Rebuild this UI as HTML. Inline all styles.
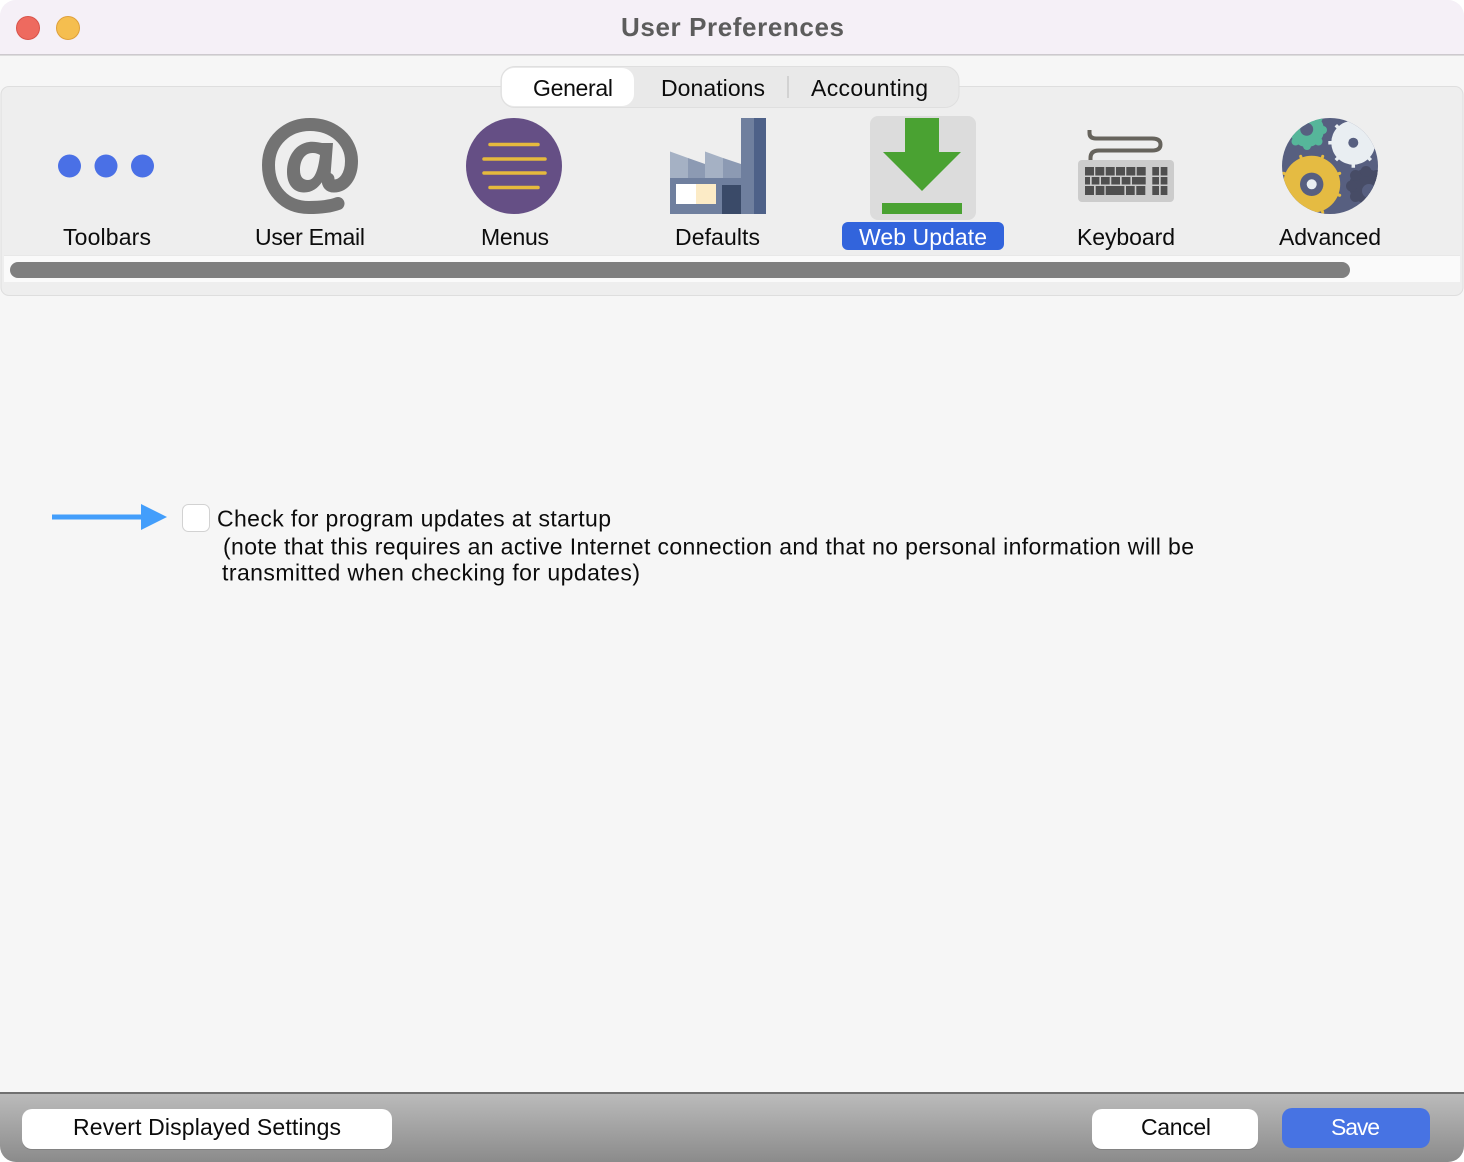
<!DOCTYPE html>
<html><head><meta charset="utf-8"><title>User Preferences</title>
<style>
html,body{margin:0;padding:0;width:1464px;height:1162px;overflow:hidden;background:#fff}
svg{display:block}
text{font-family:"Liberation Sans",sans-serif;font-size:23px;fill:#0c0c0c}
</style></head><body>
<svg width="1464" height="1162" viewBox="0 0 1464 1162" xmlns="http://www.w3.org/2000/svg">
<defs>
<linearGradient id="bar" x1="0" y1="0" x2="0" y2="1"><stop offset="0" stop-color="#bcbcbc"/><stop offset="1" stop-color="#8b8b8b"/></linearGradient>
<clipPath id="win"><rect x="0" y="0" width="1464" height="1162" rx="16"/></clipPath>
<clipPath id="gc"><circle cx="1330" cy="166" r="48"/></clipPath>
</defs>
<g clip-path="url(#win)">
<rect width="1464" height="1162" fill="#f6f6f6"/>
<rect width="1464" height="54" fill="#f5f0f7"/>
<rect y="54" width="1464" height="1" fill="#cdc9ce"/>
<rect y="55" width="1464" height="1" fill="#dcdcdc"/>
<rect x="1" y="86.500" width="1462" height="209" rx="8" fill="#eeeeee" stroke="#dedede"/>
<rect x="4" y="255" width="1456" height="1" fill="#e8e8e8"/>
<rect x="4" y="256" width="1456" height="26" fill="#fafafa"/>
<rect x="10" y="262" width="1340" height="16" rx="8" fill="#7f7f7f"/>
<rect x="0" y="1092" width="1464" height="70" fill="url(#bar)"/>
<rect x="0" y="1092" width="1464" height="2" fill="#707070"/>
</g>
<circle cx="28" cy="28" r="11.500" fill="#ee6a5f" stroke="#d9534a"/>
<circle cx="68" cy="28" r="11.500" fill="#f5be4f" stroke="#dfa03a"/>
<text x="621" y="36" textLength="223" style="font-size:26px;font-weight:bold;fill:#5c5c5c">User Preferences</text>

<rect x="501" y="66.500" width="458" height="41" rx="14" fill="#e9e9e9" stroke="#dfdfdf"/>
<rect x="502" y="68" width="132" height="38" rx="12" fill="#ffffff"/>
<rect x="787" y="76" width="2" height="22" fill="#d2d2d2"/>
<text x="533" y="96" textLength="80">General</text>
<text x="661" y="96" textLength="104">Donations</text>
<text x="811" y="96" textLength="117">Accounting</text>

<!-- Toolbars -->
<circle cx="69.500" cy="166" r="11.500" fill="#4a70e6"/>
<circle cx="106" cy="166" r="11.500" fill="#4a70e6"/>
<circle cx="142.500" cy="166" r="11.500" fill="#4a70e6"/>
<text x="63" y="245" textLength="88">Toolbars</text>

<!-- User Email -->
<path d="M338,203.500 C330,206.500 320,207.500 309,207.500 C284,207.500 268.500,189 268.500,165 C268.500,141 287,124.500 310,124.500 C334,124.500 351.500,141 351.500,161 C351.500,176 344,186 334,186 C330,186 328,184 328,179" fill="none" stroke="#737373" stroke-width="13" stroke-linecap="round"/>
<path fill-rule="evenodd" fill="#737373" d="M333,143 L322,143 C317,142 313,141.500 309,142 C296,143.500 287,156 287,172 C287,185 294,192.500 304,192.500 C312,192.500 318,188 322,182 L330,182 Z M313,153 C305,152.500 300,160 300,170 C300,177 303,180 308,180 C314,180 318,172 320,155 C318,154 316,153 313,153 Z"/>
<text x="255" y="245" textLength="110">User Email</text>

<!-- Menus -->
<circle cx="514" cy="166" r="48" fill="#654f85"/>
<g stroke="#e5b93d" stroke-width="3.500" stroke-linecap="round">
<line x1="490" y1="144.500" x2="538" y2="144.500"/>
<line x1="484" y1="159" x2="545" y2="159"/>
<line x1="484" y1="173" x2="545" y2="173"/>
<line x1="490" y1="187.500" x2="538" y2="187.500"/>
</g>
<text x="481" y="245" textLength="68">Menus</text>

<!-- Defaults -->
<path d="M670,151.500 L688,158 V179 H670Z" fill="#a5b1c4"/>
<path d="M688,158 L705,164 V179 H688Z" fill="#8c9ab3"/>
<path d="M705,151.500 L723,158 V179 H705Z" fill="#a5b1c4"/>
<path d="M723,158 L741,164 V179 H723Z" fill="#8c9ab3"/>
<rect x="670" y="178" width="71" height="36" fill="#6f7f9e"/>
<rect x="741" y="118" width="13" height="96" fill="#6f7f9e"/>
<rect x="754" y="118" width="12" height="96" fill="#4e6188"/>
<rect x="676" y="184" width="20" height="20" fill="#ffffff"/>
<rect x="696" y="184" width="20" height="20" fill="#fcebc6"/>
<rect x="722" y="185" width="19" height="29" fill="#3a4a68"/>
<text x="675" y="245" textLength="85">Defaults</text>

<!-- Web Update -->
<rect x="870" y="116" width="106" height="104" rx="8" fill="#dcdcdc"/>
<path d="M905,118 H939 V152 H961 L922,191 L883,152 H905Z" fill="#4aa232"/>
<rect x="882" y="203" width="80" height="11" fill="#4aa232"/>
<rect x="842" y="222" width="162" height="28" rx="6" fill="#3264dc"/>
<text x="859" y="245" textLength="128" style="fill:#fff">Web Update</text>

<!-- Keyboard -->
<path d="M1089.500,130 V133 Q1089.500,138.500 1096,138.500 H1152 Q1160.500,138.500 1160.500,144.500 Q1160.500,150.500 1152,150.500 H1099 Q1090.500,150.500 1090.500,158 V161" fill="none" stroke="#66635c" stroke-width="4"/>
<rect x="1078" y="160" width="96" height="42" rx="4" fill="#cccccc"/>
<g fill="#4f4f4f">
<rect x="1085" y="167" width="9" height="8.500"/><rect x="1095.300" y="167" width="9" height="8.500"/><rect x="1105.700" y="167" width="9" height="8.500"/><rect x="1116" y="167" width="9" height="8.500"/><rect x="1126.300" y="167" width="9" height="8.500"/><rect x="1136.700" y="167" width="9" height="8.500"/>
<rect x="1085" y="177" width="5" height="7.500"/><rect x="1091.700" y="177" width="7.700" height="7.500"/><rect x="1101" y="177" width="8.700" height="7.500"/><rect x="1111.300" y="177" width="8.700" height="7.500"/><rect x="1121.700" y="177" width="8.700" height="7.500"/><rect x="1132" y="177" width="13.700" height="7.500"/>
<rect x="1085" y="186" width="9" height="9"/><rect x="1095.700" y="186" width="8.700" height="9"/><rect x="1105.700" y="186" width="18.700" height="9"/><rect x="1126" y="186" width="8.700" height="9"/><rect x="1136.300" y="186" width="9" height="9"/>
<rect x="1152.300" y="167" width="6.700" height="8.500"/><rect x="1160.700" y="167" width="6.700" height="8.500"/>
<rect x="1152.300" y="177" width="6.700" height="7.500"/><rect x="1160.700" y="177" width="6.700" height="7.500"/>
<rect x="1152.300" y="186" width="6.700" height="9"/><rect x="1160.700" y="186" width="6.700" height="9"/>
</g>
<text x="1077" y="245" textLength="98">Keyboard</text>

<!-- Advanced -->
<circle cx="1330" cy="166" r="48" fill="#575f80"/>
<g clip-path="url(#gc)">
<g fill="#56b69a" transform="translate(1307 130)">
<circle r="17"/>
<circle cx="0" cy="-16" r="4"/><circle cx="11.500" cy="-11.500" r="4"/><circle cx="16" cy="0" r="4"/><circle cx="11.500" cy="11.500" r="4"/><circle cx="0" cy="16" r="4"/><circle cx="-11.500" cy="11.500" r="4"/><circle cx="-16" cy="0" r="4"/><circle cx="-11.500" cy="-11.500" r="4"/>
</g>
<circle cx="1306.700" cy="129.300" r="6.500" fill="#575f80"/>
<g fill="#474c66" transform="translate(1366 186)">
<circle r="17"/>
<circle cx="0" cy="-14.500" r="5.500"/><circle cx="10.500" cy="-10.500" r="5.500"/><circle cx="14.500" cy="0" r="5.500"/><circle cx="10.500" cy="10.500" r="5.500"/><circle cx="0" cy="14.500" r="5.500"/><circle cx="-10.500" cy="10.500" r="5.500"/><circle cx="-14.500" cy="0" r="5.500"/><circle cx="-10.500" cy="-10.500" r="5.500"/>
</g>
<circle cx="1369" cy="191" r="7" fill="#575f80"/>
<g transform="translate(1353.300 142.700)" stroke="#e9eef2" stroke-width="3.500">
<circle r="22" fill="#e9eef2" stroke="none"/>
<line x1="0" y1="-20" x2="0" y2="-25"/><line x1="20" y1="0" x2="25" y2="0"/><line x1="0" y1="20" x2="0" y2="25"/><line x1="-20" y1="0" x2="-25" y2="0"/>
<line x1="14" y1="-14" x2="17.500" y2="-17.500"/><line x1="14" y1="14" x2="17.500" y2="17.500"/><line x1="-14" y1="14" x2="-17.500" y2="17.500"/><line x1="-14" y1="-14" x2="-17.500" y2="-17.500"/>
</g>
<circle cx="1353.300" cy="142.700" r="5" fill="#575f80"/>
<g transform="translate(1311.700 184.300)" stroke="#e5bb42" stroke-width="3" stroke-linecap="round">
<circle r="28.500" fill="#e5bb42" stroke="none"/>
<line x1="-10" y1="-25" x2="-11" y2="-28"/><line x1="10" y1="-25" x2="11" y2="-28"/>
<line x1="25" y1="-10" x2="28" y2="-11"/><line x1="25" y1="10" x2="28" y2="11"/>
<line x1="10" y1="25" x2="11" y2="28"/><line x1="-10" y1="25" x2="-11" y2="28"/>
<line x1="-25" y1="-10" x2="-28" y2="-11"/><line x1="-25" y1="10" x2="-28" y2="11"/>
</g>
<circle cx="1311.700" cy="184.300" r="11.700" fill="#575f80"/>
<circle cx="1311.700" cy="184.300" r="5" fill="#e9eef2"/>
</g>
<text x="1279" y="245" textLength="102">Advanced</text>

<!-- Arrow + checkbox -->
<rect x="52" y="514.500" width="90" height="5" fill="#439efb"/>
<path d="M141,504 L167,517 L141,530Z" fill="#439efb"/>
<rect x="182.500" y="504.500" width="27" height="27" rx="6" fill="#ffffff" stroke="#d2d2d2"/>
<text x="217" y="526.500" textLength="394">Check for program updates at startup</text>
<text x="223" y="554.500" textLength="971">(note that this requires an active Internet connection and that no personal information will be</text>
<text x="222" y="580.500" textLength="418">transmitted when checking for updates)</text>

<!-- Bottom buttons -->
<rect x="22" y="1110" width="370" height="40" rx="10" fill="#6f6f6f" opacity=".5"/>
<rect x="22" y="1109" width="370" height="40" rx="10" fill="#ffffff"/>
<text x="73" y="1135" textLength="268">Revert Displayed Settings</text>
<rect x="1092" y="1110" width="166" height="40" rx="10" fill="#6f6f6f" opacity=".5"/>
<rect x="1092" y="1109" width="166" height="40" rx="10" fill="#ffffff"/>
<text x="1141" y="1135" textLength="70">Cancel</text>
<rect x="1282" y="1108" width="148" height="40" rx="10" fill="#4773e3"/>
<text x="1331" y="1135" textLength="49" style="fill:#fff">Save</text>
</svg>
</body></html>
